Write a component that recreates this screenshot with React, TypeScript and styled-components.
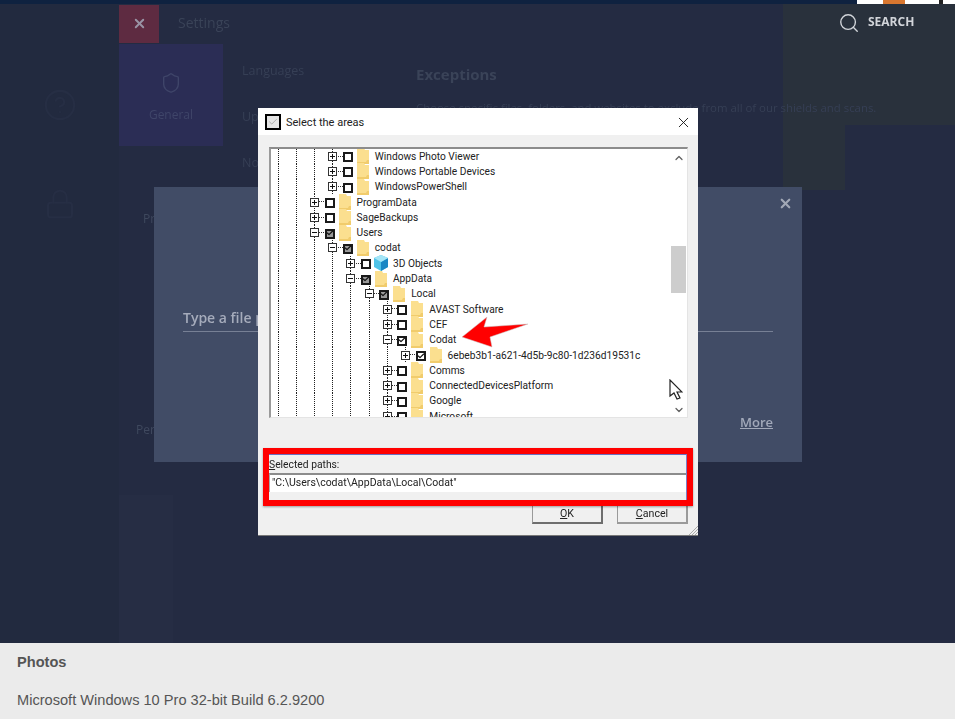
import { memo, FC } from 'react';
import styled, { createGlobalStyle } from 'styled-components';
import { Search, X, Shield, CircleHelp, Lock, Check, ChevronUp, ChevronDown } from 'lucide-react';

const GlobalStyle = createGlobalStyle`
  html, body { margin: 0; padding: 0; background: #ebebeb; }
  body { font-family: "Liberation Sans", Arial, sans-serif; }
  * { box-sizing: border-box; }
`;

const Page = styled.div`
  width: 955px;
  height: 719px;
  display: flex;
  flex-direction: column;
  overflow: hidden;
`;

const Stage = styled.div`
  position: relative;
  height: 643px;
  flex: none;
  display: flex;
  flex-direction: column;
  background: #242b42;
  overflow: hidden;
`;

const TopStrip = styled.div`
  height: 4px;
  flex: none;
  display: flex;
  background: #0f2240;
  &::after {
    content: '';
    margin-left: auto;
    width: 98px;
    background: linear-gradient(to right, #fff 26px, #d9772f 26px 48px, #fff 48px 82px, #222 82px 86px, #fff 86px);
  }
`;

const Body = styled.div`
  flex: 1;
  display: flex;
  min-height: 0;
  color: #3b4459;
  font-family: 'Open Sans', sans-serif;
  filter: blur(0.5px);
`;

const Sidebar = styled.aside`
  width: 119px;
  flex: none;
  display: flex;
  flex-direction: column;
  align-items: center;
  padding-top: 84px;
  gap: 66px;
  background: #222a3f;
  color: #262e44;
`;

const Workspace = styled.div`
  flex: 1;
  display: grid;
  grid-template-columns: 104px 560px 62px 110px;
  grid-template-rows: 39px 82px 65px 1fr;
`;

const TitleBar = styled.div`
  grid-column: 1 / 3;
  grid-row: 1;
  display: flex;
  align-items: center;
`;

const CloseTile = styled.div`
  width: 40px;
  height: 38px;
  display: flex;
  align-items: center;
  justify-content: center;
  background: #5e2b41;
  color: #9a94a4;
`;

const PageTitle = styled.div`
  margin: 0 0 2px 19px;
  font-size: 14px;
  color: #3a4358;
`;

const SearchPanel = styled.div`
  grid-column: 3 / 5;
  grid-row: 1 / 3;
  display: flex;
  align-items: flex-start;
  padding: 8px 0 0 55px;
  gap: 8px;
  background: #29313c;
  color: #d2d5da;
`;

const SearchLabel = styled.span`
  margin-top: 1px;
  font-family: 'Open Sans', sans-serif;
  font-size: 12px;
  font-weight: 700;
  line-height: 18px;
`;

const PanelTail = styled.div`
  grid-column: 3;
  grid-row: 3;
  background: #29313c;
`;

const NavColumn = styled.nav`
  grid-column: 1;
  grid-row: 2 / 5;
  display: flex;
  flex-direction: column;
`;

const NavTile = styled.div`
  height: 102px;
  margin-top: 1px;
  display: flex;
  flex-direction: column;
  align-items: center;
  padding-top: 28px;
  gap: 12px;
  background: #2b2d55;
  color: #3f4569;
  font-size: 12px;
`;

const NavItem = styled.div<{ $top: number; $left: number }>`
  margin-top: ${(p) => p.$top}px;
  padding-left: ${(p) => p.$left}px;
  font-size: 12px;
  color: #3f485e;
`;

const NavStub = styled.div`
  width: 54px;
  height: 148px;
  margin-top: auto;
  background: #262d44;
`;

const ContentRow = styled.div`
  grid-column: 2;
  grid-row: 2 / 5;
  display: flex;
`;

const Menu = styled.div`
  width: 193px;
  flex: none;
  display: flex;
  flex-direction: column;
  gap: 28px;
  padding: 19px 0 0 19px;
  font-size: 12.5px;
  line-height: 18px;
  color: #363f55;
`;

const ExceptionPane = styled.div`
  padding-top: 19px;
  white-space: nowrap;
`;

const PaneTitle = styled.div`
  font-size: 15px;
  font-weight: 700;
  line-height: 24px;
  color: #3a4358;
`;

const PaneText = styled.div`
  margin-top: 13px;
  font-size: 11.4px;
  line-height: 17px;
  color: #363f55;
`;

const PathModal = styled.section`
  position: absolute;
  left: 154px;
  top: 187px;
  width: 648px;
  height: 275px;
  padding: 121px 29px 0;
  background: #414c66;
  color: #a5abbb;
  filter: blur(0.4px);
`;

const ModalClose = styled.div`
  position: absolute;
  top: 9px;
  right: 9px;
  color: #a2a8b6;
`;

const PathField = styled.div`
  height: 24px;
  border-bottom: 1px solid #778095;
  font-family: 'Open Sans', sans-serif;
  font-size: 14px;
  font-weight: 600;
  line-height: 20px;
`;

const MoreLink = styled.div`
  margin: 81px 0 0 auto;
  width: fit-content;
  font-family: 'Open Sans', sans-serif;
  font-size: 13px;
  font-weight: 600;
  text-decoration: underline;
  color: #a2a9ba;
`;

const Dialog = styled.section`
  position: absolute;
  left: 258px;
  top: 108px;
  width: 440px;
  height: 427px;
  display: flex;
  flex-direction: column;
  background: #f0f0f0;
  box-shadow: 0 1px 0 #777;
  font-family: Roboto, sans-serif;
  color: #222;
  filter: blur(0.35px);
`;

const DialogHead = styled.header`
  height: 27px;
  flex: none;
  display: flex;
  align-items: center;
  padding: 1px 6px 0 7px;
  background: #fff;
  font-size: 11px;
`;

const HeadIcon = styled.div`
  width: 16px;
  height: 16px;
  margin-right: 5px;
  display: flex;
  align-items: center;
  justify-content: center;
  border: 2.5px solid #000;
  background: #e4e4e4;
  color: #888;
`;

const HeadClose = styled.div`
  margin-left: auto;
  display: flex;
  color: #111;
`;

const Tree = styled.div`
  position: relative;
  height: 271px;
  margin: 12px 10px 0 11px;
  padding-right: 17px;
  border-top: 2px solid #8c8c8c;
  border-left: 2px solid #9a9a9a;
  border-right: 1px solid #e4e4e4;
  border-bottom: 1px solid #e4e4e4;
  background: #fff;
  overflow: hidden;
`;

const TreeRows = styled.div`
  margin: -0.5px 0 0 -2px;
`;

const Row = styled.div`
  height: 15.3px;
  display: flex;
  align-items: center;
  white-space: nowrap;
  font-size: 10.2px;
  line-height: 15px;
`;

const Guide = styled.div`
  width: 18.2px;
  height: 100%;
  flex: none;
  background: repeating-linear-gradient(to bottom, #222 0 1px, transparent 1px 2px) center / 1px 100% no-repeat;
`;

const ToggleCell = styled(Guide)`
  position: relative;
  display: flex;
  align-items: center;
  justify-content: center;
  &::after {
    content: '';
    position: absolute;
    left: 14px;
    top: 7px;
    width: 5px;
    border-top: 1px dotted #333;
  }
`;

const Toggle = styled.div<{ $open?: boolean }>`
  position: relative;
  width: 9px;
  height: 9px;
  border: 1px solid #333;
  background: #fff;
  &::before {
    content: '';
    position: absolute;
    left: 1px;
    top: 3px;
    width: 5px;
    height: 1px;
    background: #111;
  }
  &::after {
    content: '';
    display: ${(p) => (p.$open ? 'none' : 'block')};
    position: absolute;
    left: 3px;
    top: 1px;
    width: 1px;
    height: 5px;
    background: #111;
  }
`;

const CheckBox = styled.div<{ $state: CheckState }>`
  position: relative;
  width: 10px;
  height: 10px;
  flex: none;
  margin: 2px 0 0 1px;
  border: 2px solid #1a1a1a;
  background: ${(p) => (p.$state === 'mixed' ? '#9a9a9a' : '#fff')};
`;

const CheckMark = styled(Check)`
  position: absolute;
  left: -1px;
  top: -1.5px;
  width: 8px;
  height: 8px;
  color: #111;
`;

const NodeIcon = styled.svg`
  width: 12px;
  height: 16px;
  flex: none;
  margin-left: 4px;
  overflow: visible;
`;

const RowLabel = styled.span`
  margin-left: 6px;
`;

const ScrollBar = styled.div`
  position: absolute;
  top: 0;
  right: 0;
  bottom: 0;
  width: 17px;
  display: flex;
  flex-direction: column;
  align-items: center;
  background: #fff;
  color: #606060;
`;

const ScrollThumb = styled.div`
  width: 15px;
  height: 47px;
  margin-top: 85px;
  background: #cdcdcd;
`;

const ScrollDown = styled.div`
  margin-top: auto;
  height: 16px;
`;

const ScrollUp = styled.div`
  height: 12px;
`;

const PathBox = styled.div`
  height: 58px;
  flex: none;
  margin: 30px 5px 0;
  border: 6px solid #f00;
  background: #f0f0f0;
  box-shadow: 0 1px 2px rgba(0, 0, 0, 0.35);
  position: relative;
  z-index: 1;
`;

const PathInner = styled.div`
  height: 100%;
  border-top: 1px solid #6a6fc0;
  border-right: 1px solid #7c80c8;
`;

const PathLabel = styled.div`
  height: 18px;
  padding-top: 2px;
  font-size: 10.3px;
  line-height: 16px;
`;

const PathValue = styled.div`
  height: 19px;
  padding-left: 2px;
  border-top: 2px solid #8c8c8c;
  border-left: 1px solid #aaa;
  background: #fff;
  font-size: 10.5px;
  line-height: 15px;
  white-space: nowrap;
`;

const ActionRow = styled.div`
  display: flex;
  justify-content: flex-end;
  gap: 14px;
  margin: -2px 10px 0 0;
`;

const ActionButton = styled.div<{ $primary?: boolean }>`
  width: 71px;
  height: 20px;
  display: flex;
  align-items: center;
  justify-content: center;
  background: #f0f0f0;
  border: 1px solid #9a9a9a;
  border-bottom: 2px solid ${(p) => (p.$primary ? '#6e6e6e' : '#9a9a9a')};
  border-right: 2px solid ${(p) => (p.$primary ? '#6e6e6e' : '#9a9a9a')};
  font-size: 10.6px;
`;

const ResizeGrip = styled.svg`
  position: absolute;
  right: 0;
  bottom: 0;
  width: 10px;
  height: 10px;
`;

const RedArrow = styled.svg`
  position: absolute;
  left: 460px;
  top: 315px;
  width: 70px;
  height: 34px;
`;

const Pointer = styled.svg`
  position: absolute;
  left: 668px;
  top: 379px;
  width: 15px;
  height: 22px;
`;

const Footer = styled.footer`
  height: 76px;
  flex: none;
  padding: 10px 17px 0;
  background: #ebebeb;
  color: #555;
  font-size: 14.6px;
`;

const FooterTitle = styled.div`
  font-weight: 700;
  line-height: 18px;
`;

const FooterText = styled.div`
  margin-top: 20px;
  line-height: 18px;
`;

type CheckState = 'none' | 'mixed' | 'on';

type TreeNode = {
  level: number;
  label: string;
  open?: boolean;
  check?: CheckState;
  cube?: boolean;
};

const nodes: TreeNode[] = [
  { level: 3, label: 'Windows Photo Viewer' },
  { level: 3, label: 'Windows Portable Devices' },
  { level: 3, label: 'WindowsPowerShell' },
  { level: 2, label: 'ProgramData' },
  { level: 2, label: 'SageBackups' },
  { level: 2, label: 'Users', open: true, check: 'mixed' },
  { level: 3, label: 'codat', open: true, check: 'mixed' },
  { level: 4, label: '3D Objects', cube: true },
  { level: 4, label: 'AppData', open: true, check: 'mixed' },
  { level: 5, label: 'Local', open: true, check: 'mixed' },
  { level: 6, label: 'AVAST Software' },
  { level: 6, label: 'CEF' },
  { level: 6, label: 'Codat', open: true, check: 'on' },
  { level: 7, label: '6ebeb3b1-a621-4d5b-9c80-1d236d19531c', check: 'on' },
  { level: 6, label: 'Comms' },
  { level: 6, label: 'ConnectedDevicesPlatform' },
  { level: 6, label: 'Google' },
  { level: 6, label: 'Microsoft' },
];

const FolderIcon = () => (
  <NodeIcon viewBox="0 0 12 16">
    <path d="M0 0h7l1 2h4v14H0z" fill="#fbdf8f" />
    <path d="M0 14h9l1-2h2v4H0z" fill="#f1cc6c" />
  </NodeIcon>
);

const CubeIcon = () => (
  <NodeIcon viewBox="0 0 12 16">
    <path d="M6 0l7 3v9l-7 4-7-4V3z" fill="#4fc3e8" />
    <path d="M6 7l7-4v9l-7 4z" fill="#1b87c4" />
    <path d="M6 0l7 3-7 4-7-4z" fill="#a5e6f7" />
  </NodeIcon>
);

const TreeRow: FC<{ node: TreeNode }> = ({ node }) => (
  <Row>
    {Array.from({ length: node.level }, (_, i) => (
      <Guide key={i} />
    ))}
    <ToggleCell>
      <Toggle $open={node.open} />
    </ToggleCell>
    <CheckBox $state={node.check ?? 'none'}>{node.check && <CheckMark strokeWidth={3.5} />}</CheckBox>
    {node.cube ? <CubeIcon /> : <FolderIcon />}
    <RowLabel>{node.label}</RowLabel>
  </Row>
);

const App: FC = () => {
  return (
    <Page>
      <GlobalStyle />
      <Stage>
        <TopStrip />
        <Body>
          <Sidebar>
            <CircleHelp size={34} strokeWidth={1.5} />
            <Lock size={32} strokeWidth={1.5} />
          </Sidebar>
          <Workspace>
            <TitleBar>
              <CloseTile>
                <X size={15} strokeWidth={3} />
              </CloseTile>
              <PageTitle>Settings</PageTitle>
            </TitleBar>
            <SearchPanel>
              <Search size={22} strokeWidth={1.5} />
              <SearchLabel>SEARCH</SearchLabel>
            </SearchPanel>
            <PanelTail />
            <NavColumn>
              <NavTile>
                <Shield size={22} strokeWidth={1.5} />
                General
              </NavTile>
              <NavItem $top={64} $left={24}>
                Privacy
              </NavItem>
              <NavItem $top={194} $left={17}>
                Personal
              </NavItem>
              <NavStub />
            </NavColumn>
            <ContentRow>
              <Menu>
                <div>Languages</div>
                <div>Update</div>
                <div>Notifications</div>
              </Menu>
              <ExceptionPane>
                <PaneTitle>Exceptions</PaneTitle>
                <PaneText>Choose specific files, folders, and websites to exclude from all of our shields and scans.</PaneText>
              </ExceptionPane>
            </ContentRow>
          </Workspace>
        </Body>

        <PathModal>
          <ModalClose>
            <X size={15} strokeWidth={3.5} />
          </ModalClose>
          <PathField>Type a file path</PathField>
          <MoreLink>More</MoreLink>
        </PathModal>

        <Dialog>
          <DialogHead>
            <HeadIcon>
              <Check size={10} strokeWidth={1.5} />
            </HeadIcon>
            Select the areas
            <HeadClose>
              <X size={17} strokeWidth={1.25} />
            </HeadClose>
          </DialogHead>
          <Tree>
            <TreeRows>
              {nodes.map((node) => (
                <TreeRow key={node.label} node={node} />
              ))}
            </TreeRows>
            <ScrollBar>
              <ScrollUp>
                <ChevronUp size={12} strokeWidth={2.5} />
              </ScrollUp>
              <ScrollThumb />
              <ScrollDown>
                <ChevronDown size={12} strokeWidth={2.5} />
              </ScrollDown>
            </ScrollBar>
          </Tree>
          <PathBox>
            <PathInner>
              <PathLabel>
                <u>S</u>elected paths:
              </PathLabel>
              <PathValue>"C:\Users\codat\AppData\Local\Codat"</PathValue>
            </PathInner>
          </PathBox>
          <ActionRow>
            <ActionButton $primary>
              <span>
                <u>O</u>K
              </span>
            </ActionButton>
            <ActionButton>
              <span>
                <u>C</u>ancel
              </span>
            </ActionButton>
          </ActionRow>
          <ResizeGrip viewBox="0 0 10 10">
            <path d="M10 1L1 10M10 4l-6 6M10 7l-3 3" stroke="#aaa" strokeWidth="1" />
          </ResizeGrip>
        </Dialog>

        <RedArrow viewBox="0 0 70 34">
          <path d="M2 22L27 2l-3 10 44-3-38 13 2 10z" fill="#f00" stroke="#c8c8c8" strokeWidth="0.5" />
        </RedArrow>
        <Pointer viewBox="0 0 15 22">
          <path d="M2 1v16l4-3 3 6 3-1-3-6h5z" fill="#fff" stroke="#222" strokeWidth="1.2" />
        </Pointer>
      </Stage>
      <Footer>
        <FooterTitle>Photos</FooterTitle>
        <FooterText>Microsoft Windows 10 Pro 32-bit Build 6.2.9200</FooterText>
      </Footer>
    </Page>
  );
};

export default memo(App);
